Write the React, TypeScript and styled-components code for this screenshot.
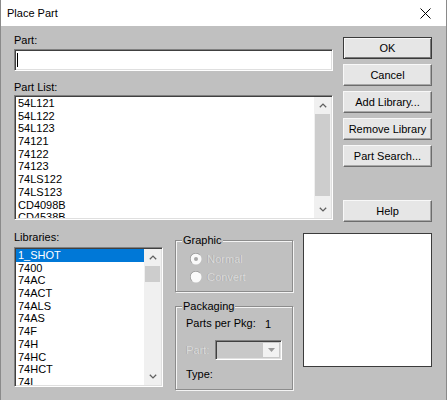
import React from "react";
import styled, { createGlobalStyle } from "styled-components";

const GlobalStyle = createGlobalStyle`
  html, body { margin: 0; padding: 0; background: #c0c0c0; }
  body {
    font-family: "Liberation Sans", Arial, sans-serif;
    font-size: 11px;
    color: #000;
  }
  * { box-sizing: border-box; }
`;

const Window = styled.div`
  width: 447px;
  height: 400px;
  background: #c0c0c0;
  border-left: 1px solid #8a8a8a;
  border-right: 1px solid #8a8a8a;
  display: flex;
  flex-direction: column;
  overflow: hidden;
`;

const TitleBar = styled.div`
  height: 26px;
  flex: none;
  background: #fff;
  display: flex;
  align-items: center;
  padding-left: 6px;
`;

const Title = styled.span`
  font-size: 11px;
  line-height: 14px;
  color: #000;
`;

const CloseButton = styled.div`
  margin-left: auto;
  width: 41px;
  height: 26px;
  display: flex;
  align-items: center;
  justify-content: center;
`;

const Body = styled.div`
  display: flex;
  flex-direction: column;
  padding: 0 13px;
`;

const TopSection = styled.div`
  display: flex;
  gap: 10px;
  height: 196px;
`;

const LeftColumn = styled.div`
  width: 319px;
  display: flex;
  flex-direction: column;
`;

const Label = styled.div<{ $top: number }>`
  margin-top: ${(p) => p.$top}px;
  height: 13px;
  line-height: 13px;
  white-space: nowrap;
`;

const TextInput = styled.div`
  margin-top: 2px;
  height: 22px;
  background: #fff;
  border: 1px solid;
  border-color: #808080 #fff #fff #808080;
  box-shadow: inset 1px 1px #404040, inset -1px -1px #dfdfdf;
  padding: 3px 2px;
  display: flex;
`;

const Caret = styled.div`
  width: 1px;
  height: 14px;
  background: #000;
`;

const ListBox = styled.div<{ $top: number; $height: number }>`
  margin-top: ${(p) => p.$top}px;
  height: ${(p) => p.$height}px;
  background: #fff;
  border: 1px solid;
  border-color: #808080 #fff #fff #808080;
  box-shadow: inset 1px 1px #404040, inset -1px -1px #dfdfdf;
  padding: 1px;
  display: flex;
  overflow: hidden;
`;

const ListItems = styled.div`
  flex: 1;
  min-width: 0;
  overflow: hidden;
  display: flex;
  flex-direction: column;
`;

const ListItem = styled.div<{ $selected?: boolean }>`
  flex: none;
  height: 12.7px;
  line-height: 12.7px;
  padding-left: 2px;
  white-space: nowrap;
  background: ${(p) => (p.$selected ? "#0078d7" : "transparent")};
  color: ${(p) => (p.$selected ? "#fff" : "#000")};
`;

const Scrollbar = styled.div`
  width: 17px;
  flex: none;
  background: #f0f0f0;
  display: flex;
  flex-direction: column;
`;

const ScrollArrow = styled.div`
  height: 17px;
  flex: none;
  display: flex;
  align-items: center;
  justify-content: center;
`;

const Track = styled.div`
  flex: 1;
  display: flex;
  flex-direction: column;
  padding: 0 1px;
`;

const Thumb = styled.div<{ $offset: number; $size: number }>`
  margin-top: ${(p) => p.$offset}px;
  height: ${(p) => p.$size}px;
  background: #cdcdcd;
`;

const ButtonColumn = styled.div`
  width: 89px;
  display: flex;
  flex-direction: column;
  gap: 5px;
  padding-top: 11px;
`;

const Button = styled.div<{ $default?: boolean; $gapBefore?: number }>`
  height: 22px;
  margin-top: ${(p) => p.$gapBefore ?? 0}px;
  background: #e6e6e6;
  display: flex;
  align-items: center;
  justify-content: center;
  white-space: nowrap;
  border: 1px solid;
  border-color: ${(p) =>
    p.$default ? "#3a3a3a" : "#f8f8f8 #6c6c6c #6c6c6c #f8f8f8"};
  box-shadow: ${(p) =>
    p.$default
      ? "inset 1px 1px #f8f8f8, inset -1px -1px #7a7a7a"
      : "inset -1px -1px #a8a8a8"};
`;

const BottomSection = styled.div`
  display: flex;
  margin-top: 9px;
`;

const LibraryColumn = styled.div`
  width: 149px;
  display: flex;
  flex-direction: column;
`;

const MiddleColumn = styled.div`
  width: 118px;
  margin: 9px 10px 0 12px;
  display: flex;
  flex-direction: column;
`;

const GroupBox = styled.div<{ $top: number; $height: number; $padTop: number }>`
  position: relative;
  margin-top: ${(p) => p.$top}px;
  height: ${(p) => p.$height}px;
  border: 1px solid #8c8c8c;
  box-shadow: inset 1px 1px #f4f4f4, 1px 1px #f4f4f4;
  padding: ${(p) => p.$padTop}px 0 0 10px;
  display: flex;
  flex-direction: column;
`;

const GroupTitle = styled.span`
  position: absolute;
  top: -7px;
  left: 6px;
  padding: 0 1px;
  line-height: 13px;
  background: #c0c0c0;
  white-space: nowrap;
`;

const RadioRow = styled.div`
  height: 18px;
  display: flex;
  align-items: center;
  gap: 5px;
  padding-left: 4px;
`;

const DisabledText = styled.span`
  color: #dcdcdc;
  text-shadow: -0.5px -0.5px 0 #9a9a9a;
  line-height: 13px;
  white-space: nowrap;
`;

const InfoRow = styled.div<{ $top: number; $height: number }>`
  margin-top: ${(p) => p.$top}px;
  height: ${(p) => p.$height}px;
  display: flex;
  align-items: center;
`;

const InfoLabel = styled.span<{ $width: number }>`
  width: ${(p) => p.$width}px;
  flex: none;
  white-space: nowrap;
  line-height: 13px;
`;

const Combo = styled.div`
  width: 67px;
  height: 20px;
  border: 1px solid;
  border-color: #808080 #fff #fff #808080;
  box-shadow: inset 1px 1px #404040, inset -1px -1px #dfdfdf;
  background: #c8c8c8;
  padding: 2px;
  display: flex;
  justify-content: flex-end;
`;

const ComboButton = styled.div`
  width: 16px;
  background: #f2f2f2;
  display: flex;
  align-items: center;
  justify-content: center;
`;

const Preview = styled.div`
  width: 129px;
  height: 134px;
  margin-top: 2px;
  background: #fff;
  border: 1px solid #3c3c3c;
`;

const ChevronUp = () => (
  <svg width="8" height="5" viewBox="0 0 8 5">
    <path d="M0.8 4.3 L4 1.1 L7.2 4.3" fill="none" stroke="#606060" strokeWidth="1.3" />
  </svg>
);

const ChevronDown = () => (
  <svg width="8" height="5" viewBox="0 0 8 5">
    <path d="M0.8 0.7 L4 3.9 L7.2 0.7" fill="none" stroke="#606060" strokeWidth="1.3" />
  </svg>
);

const Radio = ({ checked }: { checked?: boolean }) => (
  <svg width="12" height="12" viewBox="0 0 12 12">
    <circle cx="6" cy="6" r="5.5" fill="#fafafa" />
    <path d="M1.8 9.8 A5.3 5.3 0 0 1 9.8 1.8" fill="none" stroke="#a0a0a0" strokeWidth="1" />
    {checked && <circle cx="6" cy="6" r="2" fill="#a8a8a8" />}
  </svg>
);

const partList = [
  "54L121", "54L122", "54L123", "74121", "74122", "74123",
  "74LS122", "74LS123", "CD4098B", "CD4538B",
];

const libraries = [
  "1_SHOT", "7400", "74AC", "74ACT", "74ALS", "74AS", "74F",
  "74H", "74HC", "74HCT", "74L",
];

const ScrollBarView = ({ offset, size }: { offset: number; size: number }) => (
  <Scrollbar>
    <ScrollArrow><ChevronUp /></ScrollArrow>
    <Track><Thumb $offset={offset} $size={size} /></Track>
    <ScrollArrow><ChevronDown /></ScrollArrow>
  </Scrollbar>
);

export default function App() {
  return (
    <>
      <GlobalStyle />
      <Window>
        <TitleBar>
          <Title>Place Part</Title>
          <CloseButton>
            <svg width="11" height="11" viewBox="0 0 11 11">
              <path d="M0.5 0.5 L10.5 10.5 M10.5 0.5 L0.5 10.5" stroke="#000" strokeWidth="1" />
            </svg>
          </CloseButton>
        </TitleBar>
        <Body>
          <TopSection>
            <LeftColumn>
              <Label $top={8}>Part:</Label>
              <TextInput><Caret /></TextInput>
              <Label $top={10}>Part List:</Label>
              <ListBox $top={1} $height={125}>
                <ListItems>
                  {partList.map((p) => (
                    <ListItem key={p}>{p}</ListItem>
                  ))}
                </ListItems>
                <ScrollBarView offset={0} size={82} />
              </ListBox>
            </LeftColumn>
            <ButtonColumn>
              <Button $default>OK</Button>
              <Button>Cancel</Button>
              <Button>Add Library...</Button>
              <Button>Remove Library</Button>
              <Button>Part Search...</Button>
              <Button $gapBefore={28}>Help</Button>
            </ButtonColumn>
          </TopSection>
          <BottomSection>
            <LibraryColumn>
              <Label $top={0}>Libraries:</Label>
              <ListBox $top={3} $height={140}>
                <ListItems>
                  {libraries.map((l, i) => (
                    <ListItem key={l} $selected={i === 0}>{l}</ListItem>
                  ))}
                </ListItems>
                <ScrollBarView offset={0} size={16} />
              </ListBox>
            </LibraryColumn>
            <MiddleColumn>
              <GroupBox $top={0} $height={52} $padTop={9}>
                <GroupTitle>Graphic</GroupTitle>
                <RadioRow>
                  <Radio checked />
                  <DisabledText>Normal</DisabledText>
                </RadioRow>
                <RadioRow>
                  <Radio />
                  <DisabledText>Convert</DisabledText>
                </RadioRow>
              </GroupBox>
              <GroupBox $top={14} $height={84} $padTop={10}>
                <GroupTitle>Packaging</GroupTitle>
                <InfoRow $top={0} $height={13}>
                  <InfoLabel $width={79}>Parts per Pkg:</InfoLabel>
                  <span>1</span>
                </InfoRow>
                <InfoRow $top={10} $height={20}>
                  <InfoLabel $width={29}><DisabledText>Part:</DisabledText></InfoLabel>
                  <Combo>
                    <ComboButton>
                      <svg width="7" height="4" viewBox="0 0 7 4">
                        <path d="M0 0 L7 0 L3.5 4 Z" fill="#9a9a9a" />
                      </svg>
                    </ComboButton>
                  </Combo>
                </InfoRow>
                <InfoRow $top={8} $height={13}>
                  <InfoLabel $width={40}>Type:</InfoLabel>
                </InfoRow>
              </GroupBox>
            </MiddleColumn>
            <Preview />
          </BottomSection>
        </Body>
      </Window>
    </>
  );
}
